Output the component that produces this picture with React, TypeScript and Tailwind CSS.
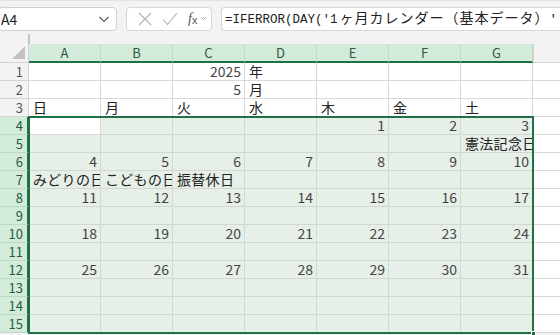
import { Fragment } from 'react'

const cols = ['A', 'B', 'C', 'D', 'E', 'F', 'G']

type Cell = { t: string; r?: boolean }
const data: Record<number, Record<number, Cell>> = {
    1: { 2: { t: '2025', r: true }, 3: { t: '年' } },
    2: { 2: { t: '5', r: true }, 3: { t: '月' } },
    3: { 0: { t: '日' }, 1: { t: '月' }, 2: { t: '火' }, 3: { t: '水' }, 4: { t: '木' }, 5: { t: '金' }, 6: { t: '土' } },
    4: { 4: { t: '1', r: true }, 5: { t: '2', r: true }, 6: { t: '3', r: true } },
    5: { 6: { t: '憲法記念日' } },
    6: { 0: { t: '4', r: true }, 1: { t: '5', r: true }, 2: { t: '6', r: true }, 3: { t: '7', r: true }, 4: { t: '8', r: true }, 5: { t: '9', r: true }, 6: { t: '10', r: true } },
    7: { 0: { t: 'みどりの日' }, 1: { t: 'こどもの日' }, 2: { t: '振替休日' } },
    8: { 0: { t: '11', r: true }, 1: { t: '12', r: true }, 2: { t: '13', r: true }, 3: { t: '14', r: true }, 4: { t: '15', r: true }, 5: { t: '16', r: true }, 6: { t: '17', r: true } },
    10: { 0: { t: '18', r: true }, 1: { t: '19', r: true }, 2: { t: '20', r: true }, 3: { t: '21', r: true }, 4: { t: '22', r: true }, 5: { t: '23', r: true }, 6: { t: '24', r: true } },
    12: { 0: { t: '25', r: true }, 1: { t: '26', r: true }, 2: { t: '27', r: true }, 3: { t: '28', r: true }, 4: { t: '29', r: true }, 5: { t: '30', r: true }, 6: { t: '31', r: true } },
}

const rows = Array.from({ length: 15 }, (_, i) => i + 1)

export default function App() {
    return (
        <main className="w-[560px] h-[335px] overflow-hidden bg-[#f3f3f3] font-['Noto_Sans_CJK_JP','Noto_Sans',sans-serif] text-[#222]">
            {/* formula bar */}
            <div className="h-[44px] relative border-t border-[#e3e3e3]">
                <div className="flex items-center gap-[9px] pt-[5px] h-[30px]">
                    <div className="w-[119px] h-[24px] -ml-[2px] bg-white border border-[#cfcfcf] rounded-[4px] flex items-center justify-between pl-[2px] pr-[6px]">
                        <span className="text-[14px] leading-none">A4</span>
                        <svg width="12" height="8" viewBox="0 0 12 8" fill="none" stroke="#555" strokeWidth="1.1"><path d="M1.5 2l4.5 4.5L10.5 2" /></svg>
                    </div>
                    <div className="w-[86px] h-[24px] bg-white border border-[#d6d6d6] rounded-[4px] flex items-center pl-[11px] gap-[10px]">
                        <svg width="14" height="14" viewBox="0 0 14 14" stroke="#b0b0b0" strokeWidth="1.1"><path d="M1 1l12 12M13 1L1 13" /></svg>
                        <svg width="16" height="14" viewBox="0 0 16 14" fill="none" stroke="#b0b0b0" strokeWidth="1.1"><path d="M1 7.5l4.5 5L15 1" /></svg>
                        <span className="flex items-center text-[#555] font-['Liberation_Serif',serif] italic text-[14px] leading-none">f<span className="text-[11px] not-italic font-['Liberation_Sans',sans-serif] mt-[4px]">x</span></span>
                        <svg width="7" height="5" viewBox="0 0 7 5" fill="none" stroke="#aaa" strokeWidth="1" className="-ml-[7px]"><path d="M1 1l2.5 2.5L6 1" /></svg>
                    </div>
                    <div className="flex-1 h-[24px] bg-white border border-[#d6d6d6] rounded-l-[4px] border-r-0 flex items-center pl-[3px] overflow-hidden whitespace-nowrap">
                        <span className="font-['Liberation_Mono','Noto_Sans_CJK_JP',monospace] text-[12.5px] leading-none text-[#222]">=IFERROR(DAY('1<span className="font-['Noto_Sans_CJK_JP',sans-serif] text-[14px] tracking-[1px] ml-[2px]">ヶ月カレンダー（基本データ）</span>'!A1),"")</span>
                    </div>
                </div>
                <div className="absolute left-[28px] top-[33px] w-[2px] h-[11px] bg-[#c4c4c4]"></div>
            </div>

            {/* sheet */}
            <div className="relative grid grid-cols-[29px_repeat(7,72px)_1fr] grid-rows-[19px_repeat(15,18px)] bg-white text-[14px]">
                <div className="bg-[#f3f3f3] border-r border-b border-[#d4d4d4] relative">
                    <div className="absolute right-[3px] bottom-[3px] w-0 h-0 border-l-[13px] border-l-transparent border-b-[13px] border-b-[#c2c2c2]"></div>
                </div>
                {cols.map(c => (
                    <div key={c} className="bg-[#d3ebdb] border-r border-[#c2d6c9] border-b-2 border-b-[#1e7145] flex items-center justify-center text-[13px] text-[#2c5a3f] leading-none">{c}</div>
                ))}
                <div className="bg-[#f3f3f3] border-l border-[#d4d4d4] border-b border-b-[#d4d4d4]"></div>

                {rows.map(r => {
                    const sel = r >= 4
                    return (
                        <Fragment key={r}>
                            <div className={sel
                                ? 'bg-[#d3ebdb] border-r-2 border-r-[#1e7145] border-b border-b-[#c2d6c9] flex items-end justify-end pr-[4px] text-[13px] leading-[17px] text-[#2c5a3f]'
                                : 'bg-[#f3f3f3] border-r border-r-[#d4d4d4] border-b border-b-[#d4d4d4] flex items-end justify-end pr-[5px] text-[13px] leading-[17px] text-[#555]'}>{r}</div>
                            {cols.map((c, ci) => {
                                const cell = data[r]?.[ci]
                                const active = r === 4 && ci === 0
                                const bg = sel && !active ? 'bg-[#e7efe9] border-[#d0d8d2]' : 'bg-white border-[#d9d9d9]'
                                return (
                                    <div key={c} className={`${bg} border-r border-b overflow-hidden whitespace-nowrap flex items-end leading-[17px] ${cell?.r ? 'justify-end pr-[3px] text-[#444]' : 'justify-start pl-[4px] text-[#222] tracking-[0.3px]'}`}>
                                        {cell?.t}
                                    </div>
                                )
                            })}
                            <div className="bg-white border-b border-[#d9d9d9]"></div>
                        </Fragment>
                    )
                })}

                {/* selection outline */}
                <div className="absolute left-[28px] top-[72px] w-[506px] h-[218px] border-2 border-[#1e7145] pointer-events-none"></div>
                <div className="absolute left-[531px] top-[287px] w-[5px] h-[5px] bg-[#1e7145] border border-white pointer-events-none"></div>
            </div>
        </main>
    )
}
